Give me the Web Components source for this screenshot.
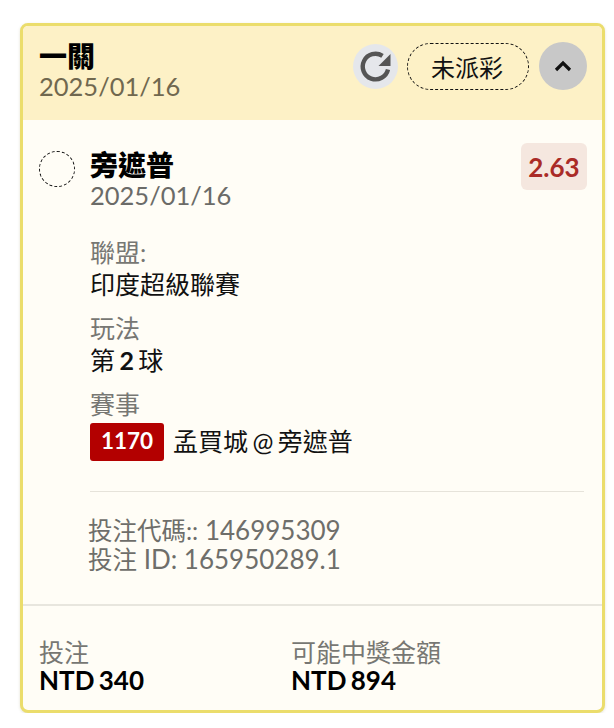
<!DOCTYPE html>
<html lang="zh-Hant">

<head>
  <meta charset="UTF-8">
  <meta name="viewport" content="width=device-width, initial-scale=1.0">
  <title>Bet slip</title>
  <style>
    html, body {
      margin: 0;
      background: #FFFFFF;
    }

    body {
      padding: 23px 9px 0 20px;
      font-family: Lato, "Noto Sans CJK TC", sans-serif;
    }

    .cjk {
      font-size: 24.5px;
    }
  </style>
</head>

<body>
  <bet-card>
    <bet-header slot="header" title-text="一關" date="2025/01/16"></bet-header>
    <bet-selection name="旁遮普" date="2025/01/16" odds="2.63">
      <bet-field label="聯盟:">印度超級聯賽</bet-field>
      <bet-field label="玩法">第 <b>2</b> 球</bet-field>
      <bet-field label="賽事" badged><span slot="badge">1170</span>孟買城 @ 旁遮普</bet-field>
      <div slot="refs"><span class="cjk">投注代碼::</span> 146995309</div>
      <div slot="refs"><span class="cjk">投注</span> ID: 165950289.1</div>
    </bet-selection>
    <bet-totals slot="footer" stake="NTD 340" payout="NTD 894"></bet-totals>
  </bet-card>

  <script>
    class BetCard extends HTMLElement {
      constructor() {
        super();
        this.attachShadow({ mode: 'open' });
        this.shadowRoot.innerHTML = `
        <style>
          :host {
            display: block;
            box-sizing: border-box;
            width: 585px;
            height: 690px;
            border: 3px solid #EBDD6C;
            border-radius: 8px;
            background: #FFFDF6;
            overflow: hidden;
            box-shadow: 0 1px 3px rgba(120, 110, 40, 0.2);
          }

          .wrap {
            display: flex;
            flex-direction: column;
            height: 100%;
          }

          ::slotted(bet-totals) {
            margin-top: auto;
          }
        </style>
        <div class="wrap">
          <slot name="header"></slot>
          <slot></slot>
          <slot name="footer"></slot>
        </div>
      `;
      }
    }

    class BetHeader extends HTMLElement {
      constructor() {
        super();
        this.attachShadow({ mode: 'open' });
        this.shadowRoot.innerHTML = `
        <style>
          :host {
            display: flex;
            box-sizing: border-box;
            height: 94px;
            padding: 15px 15px 0 16px;
            background: #FDF1C6;
            justify-content: space-between;
            align-items: flex-start;
          }

          .title {
            font-size: 28px;
            font-weight: 900;
            line-height: 30px;
            color: #000;
          }

          .date {
            font-size: 25.5px;
            line-height: 30px;
            color: #70684F;
          }

          .actions {
            display: flex;
            align-items: center;
            gap: 9px;
            margin-top: 1px;
          }

          .refresh {
            width: 45px;
            height: 45px;
            border-radius: 50%;
            background: #E5E7EB;
            display: flex;
            align-items: center;
            justify-content: center;
          }

          .status {
            box-sizing: border-box;
            width: 122px;
            height: 47px;
            margin-right: 1px;
            padding-right: 2px;
            border: 1px dashed #111;
            border-radius: 24px;
            display: flex;
            align-items: center;
            justify-content: center;
            font-size: 24px;
            color: #111;
          }

          .toggle {
            width: 48px;
            height: 48px;
            border-radius: 50%;
            background: #C8C8C8;
            display: flex;
            align-items: center;
            justify-content: center;
          }
        </style>
        <div>
          <div class="title"></div>
          <div class="date"></div>
        </div>
        <div class="actions">
          <div class="refresh">
            <svg width="34" height="34" viewBox="0 0 34 34" fill="none">
              <path d="M29 20.5A12.8 12.8 0 1 1 23.5 6.8" stroke="#555" stroke-width="4.4"/>
              <path d="M31.5 5V17H19.5Z" fill="#555"/>
            </svg>
          </div>
          <div class="status">未派彩</div>
          <div class="toggle">
            <svg width="20" height="14" viewBox="0 0 20 14" fill="none">
              <path d="M3 11L10 4L17 11" stroke="#111" stroke-width="3.2"/>
            </svg>
          </div>
        </div>
      `;
      }

      connectedCallback() {
        this.shadowRoot.querySelector('.title').textContent = this.getAttribute('title-text');
        this.shadowRoot.querySelector('.date').textContent = this.getAttribute('date');
      }
    }

    class BetSelection extends HTMLElement {
      constructor() {
        super();
        this.attachShadow({ mode: 'open' });
        this.shadowRoot.innerHTML = `
        <style>
          :host {
            display: block;
            padding: 23px 15px 0 16px;
          }

          .top {
            display: flex;
            align-items: flex-start;
          }

          .radio {
            box-sizing: border-box;
            width: 36px;
            height: 36px;
            margin: 8px 15px 0 0;
            border: 1px dashed #111;
            border-radius: 50%;
            flex: none;
          }

          .name {
            font-size: 28px;
            font-weight: 900;
            line-height: 30px;
            margin-top: 7px;
            color: #000;
          }

          .date {
            font-size: 25.5px;
            line-height: 30px;
            color: #6B6B68;
          }

          .odds {
            margin-left: auto;
            width: 66px;
            height: 47px;
            border-radius: 6px;
            background: #F5E7DF;
            display: flex;
            align-items: center;
            justify-content: center;
            font-size: 26px;
            font-weight: 700;
            color: #AA2B27;
          }

          .body {
            margin-left: 51px;
            padding-top: 27px;
            display: flex;
            flex-direction: column;
            gap: 13px;
          }

          hr {
            margin: 30px 3px 24px 51px;
            border: 0;
            border-top: 1px solid #E6E3DA;
          }

          .refs {
            margin-left: 49px;
            font-size: 26px;
            line-height: 29px;
            color: #6E6E6A;
          }
        </style>
        <div class="top">
          <div class="radio"></div>
          <div>
            <div class="name"></div>
            <div class="date"></div>
          </div>
          <div class="odds"></div>
        </div>
        <div class="body"><slot></slot></div>
        <hr>
        <div class="refs"><slot name="refs"></slot></div>
      `;
      }

      connectedCallback() {
        this.shadowRoot.querySelector('.name').textContent = this.getAttribute('name');
        this.shadowRoot.querySelector('.date').textContent = this.getAttribute('date');
        this.shadowRoot.querySelector('.odds').textContent = this.getAttribute('odds');
      }
    }

    class BetField extends HTMLElement {
      constructor() {
        super();
        this.attachShadow({ mode: 'open' });
        this.shadowRoot.innerHTML = `
        <style>
          :host {
            display: block;
          }

          .label {
            font-size: 25px;
            line-height: 31px;
            color: #777773;
          }

          .value {
            display: flex;
            align-items: center;
            min-height: 32px;
            font-size: 25px;
            line-height: 32px;
            word-spacing: -2px;
            color: #111;
            white-space: pre-wrap;
          }

          :host([badged]) .value span {
            align-self: flex-end;
            margin-bottom: 4px;
          }

          ::slotted([slot="badge"]) {
            box-sizing: border-box;
            height: 38px;
            width: 74px;
            margin: 3px 9px 0 0;
            border-radius: 3px;
            background: #B30000;
            color: #FFF;
            font-size: 22.5px;
            font-weight: 700;
            text-align: center;
            line-height: 36px;
          }
        </style>
        <div class="label"></div>
        <div class="value"><slot name="badge"></slot><span><slot></slot></span></div>
      `;
      }

      connectedCallback() {
        this.shadowRoot.querySelector('.label').textContent = this.getAttribute('label');
      }
    }

    class BetTotals extends HTMLElement {
      constructor() {
        super();
        this.attachShadow({ mode: 'open' });
        this.shadowRoot.innerHTML = `
        <style>
          :host {
            display: grid;
            grid-template-columns: 252px 1fr;
            box-sizing: border-box;
            height: 106px;
            padding: 31px 16px 0 16px;
            border-top: 2px solid #E8E6DE;
          }

          .label {
            font-size: 25px;
            line-height: 30px;
            color: #777773;
          }

          .value {
            font-size: 26px;
            font-weight: 700;
            word-spacing: -2px;
            line-height: 26px;
            color: #000;
          }
        </style>
        <div>
          <div class="label">投注</div>
          <div class="value" id="stake"></div>
        </div>
        <div>
          <div class="label">可能中獎金額</div>
          <div class="value" id="payout"></div>
        </div>
      `;
      }

      connectedCallback() {
        this.shadowRoot.querySelector('#stake').textContent = this.getAttribute('stake');
        this.shadowRoot.querySelector('#payout').textContent = this.getAttribute('payout');
      }
    }

    customElements.define('bet-card', BetCard);
    customElements.define('bet-header', BetHeader);
    customElements.define('bet-selection', BetSelection);
    customElements.define('bet-field', BetField);
    customElements.define('bet-totals', BetTotals);
  </script>
</body>

</html>
